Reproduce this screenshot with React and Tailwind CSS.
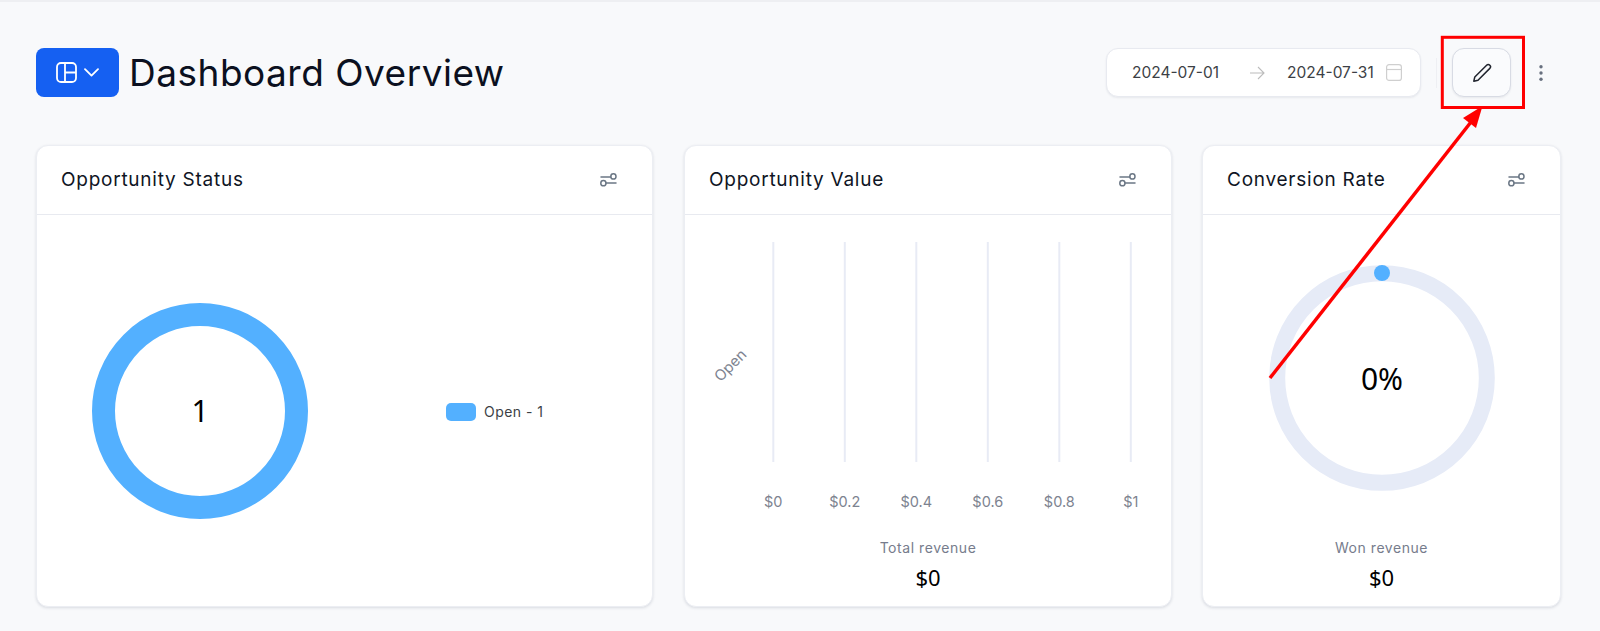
import React from 'react';

const inter = { fontFamily: 'Inter, sans-serif' };
const ticks = ['$0', '$0.2', '$0.4', '$0.6', '$0.8', '$1'];

const SlidersIcon = () => (
  <svg width="17" height="14" viewBox="0 0 17 14" fill="none" stroke="#6b7785" strokeWidth="1.5">
    <path d="M1 4H10.8" strokeLinecap="round" />
    <circle cx="13.4" cy="3.4" r="2.6" />
    <circle cx="3.4" cy="10.2" r="2.6" />
    <path d="M6 10H16" strokeLinecap="round" />
  </svg>
);

const Card = ({ title, width, children }) => (
  <div className={`${width} h-[462px] flex flex-col bg-white rounded-xl border border-[#eceef3] shadow-[0_1px_3px_rgba(30,40,70,0.14)]`}>
    <div className="h-[69px] shrink-0 flex items-center justify-between pl-[24px] pr-[35px] border-b border-[#e8eaf0]">
      <h2 className="text-[19px] tracking-[0.75px] text-[#0f1524]">{title}</h2>
      <SlidersIcon />
    </div>
    {children}
  </div>
);

const Stat = ({ label }) => (
  <div className="text-center pb-[15px]">
    <div className="text-sm leading-5 tracking-[0.55px] text-[#767c8c]">{label}</div>
    <div className="mt-[5px] text-[22px] leading-7 text-black font-['Noto_Sans',sans-serif]">$0</div>
  </div>
);

export default function App() {
  return (
    <div style={inter} className="relative h-[631px] overflow-hidden bg-[#f8f9fb] pl-[36px] pr-[36px] pt-[48px] border-t-2 border-[#eeeff2] box-border">
      {/* Header */}
      <div className="flex items-center justify-between -mt-[2px]">
        <div className="flex items-center gap-[10px]">
          <button className="w-[83px] h-[49px] flex items-center justify-center gap-[7px] bg-[#1560f2] rounded-lg">
            <svg width="21" height="21" viewBox="0 0 21 21" fill="none" stroke="white" strokeWidth="1.8">
              <rect x="1" y="1" width="19" height="19" rx="4" />
              <path d="M9 1V20M9 10.5H20" />
            </svg>
            <svg width="15" height="9" viewBox="0 0 15 9" fill="none" stroke="white" strokeWidth="1.8" strokeLinecap="round" strokeLinejoin="round">
              <path d="M1 1.2L7.5 7.6L14 1.2" />
            </svg>
          </button>
          <h1 className="text-[37px] leading-none tracking-[0.5px] text-[#0b1020]">Dashboard Overview</h1>
        </div>
        <div className="flex items-center">
          <div className="w-[315px] h-[49px] flex items-center pl-[25px] bg-white rounded-xl border border-[#e8eaf0] shadow-[0_1px_2px_rgba(30,40,70,0.08)] text-[15.5px] text-[#3c3f45]">
            <span>2024-07-01</span>
            <svg className="ml-[31px] mr-[22px]" width="15" height="14" viewBox="0 0 15 14" fill="none" stroke="#bcbcbc" strokeWidth="1.1">
              <path d="M0 7H14M8 1L14 7L8 13" />
            </svg>
            <span>2024-07-31</span>
            <svg className="ml-[12px]" width="16" height="17" viewBox="0 0 16 17" fill="none" stroke="#cfcfcf" strokeWidth="1.2">
              <rect x="0.6" y="0.6" width="14.8" height="15.8" rx="2.5" />
              <path d="M0.6 5.5H15.4" />
            </svg>
          </div>
          <div className="ml-[15px] w-px h-[30px] bg-[#eeeff3]" />
          <button className="ml-[15px] w-[59px] h-[49px] flex items-center justify-center bg-[#fafbfd] rounded-xl border border-[#d8dbe4] shadow-[0_1px_2px_rgba(30,40,70,0.08)]">
            <svg width="20" height="20" viewBox="0 0 20 20" fill="none" stroke="#20242e" strokeWidth="1.5" strokeLinejoin="round">
              <path d="M1.8 18.2L2.8 14L14.6 2.2A2.2 2.2 0 0 1 17.8 5.4L6 17.2Z" />
            </svg>
          </button>
          <svg className="ml-[28px] mr-[21px]" width="4" height="16" viewBox="0 0 4 16" fill="#68707f">
            <circle cx="2" cy="1.7" r="1.7" />
            <circle cx="2" cy="8" r="1.7" />
            <circle cx="2" cy="14.3" r="1.7" />
          </svg>
        </div>
      </div>

      {/* Cards */}
      <div className="mt-[48px] flex">
        <Card title="Opportunity Status" width="w-[617px]">
          <div className="flex-1 flex items-center pl-[55px]">
            <svg width="216" height="216" viewBox="0 0 216 216">
              <circle cx="108" cy="108" r="96.5" fill="none" stroke="#53b0ff" strokeWidth="23" />
              <text x="108" y="119" textAnchor="middle" fontSize="30" fill="#000" fontFamily="Noto Sans, sans-serif">1</text>
            </svg>
            <div className="ml-[138px] mt-[3px] flex items-center gap-[8px]">
              <span className="w-[30px] h-[18px] rounded-[5px] bg-[#53b0ff]" />
              <span className="text-sm tracking-[0.45px] text-[#3c3f45]">Open - 1</span>
            </div>
          </div>
        </Card>

        <div className="ml-[31px]">
          <Card title="Opportunity Value" width="w-[488px]">
            <div className="flex-1">
              <svg width="486" height="300" viewBox="0 0 486 300">
                {ticks.map((t, i) => (
                  <g key={t}>
                    <line x1={88.3 + i * 71.5} x2={88.3 + i * 71.5} y1="27" y2="247" stroke="#e8ebf5" strokeWidth="2" />
                    <text x={88.3 + i * 71.5} y="292" textAnchor="middle" fontSize="14.5" fill="#7d8390" fontFamily="Inter, sans-serif">{t}</text>
                  </g>
                ))}
                <text transform="translate(49 154) rotate(-45)" textAnchor="middle" fontSize="15" fill="#7d8390" fontFamily="Inter, sans-serif">Open</text>
              </svg>
            </div>
            <Stat label="Total revenue" />
          </Card>
        </div>

        <div className="ml-[30px]">
          <Card title="Conversion Rate" width="w-[359px]">
            <div className="flex-1 flex justify-center pt-[49px]">
              <svg width="228" height="228" viewBox="0 0 228 228">
                <circle cx="114" cy="114" r="104.8" fill="none" stroke="#e6ebf7" strokeWidth="16" />
                <circle cx="114" cy="9" r="8" fill="#53b0ff" />
                <text x="114" y="126" textAnchor="middle" fontSize="30" fill="#000" fontFamily="Noto Sans, sans-serif">0%</text>
              </svg>
            </div>
            <Stat label="Won revenue" />
          </Card>
        </div>
      </div>

      {/* Annotation drawn on top of the screenshot */}
      <svg className="absolute left-0 -top-[2px] pointer-events-none" width="1600" height="631" viewBox="0 0 1600 631" fill="none">
        <rect x="1442.3" y="37.3" width="81.2" height="70.2" stroke="#ff0000" strokeWidth="3" />
        <path d="M1270 378L1471 122" stroke="#ff0000" strokeWidth="3.5" />
        <polygon points="1482.5,106 1463,118 1476,128" fill="#ff0000" />
      </svg>
    </div>
  );
}
